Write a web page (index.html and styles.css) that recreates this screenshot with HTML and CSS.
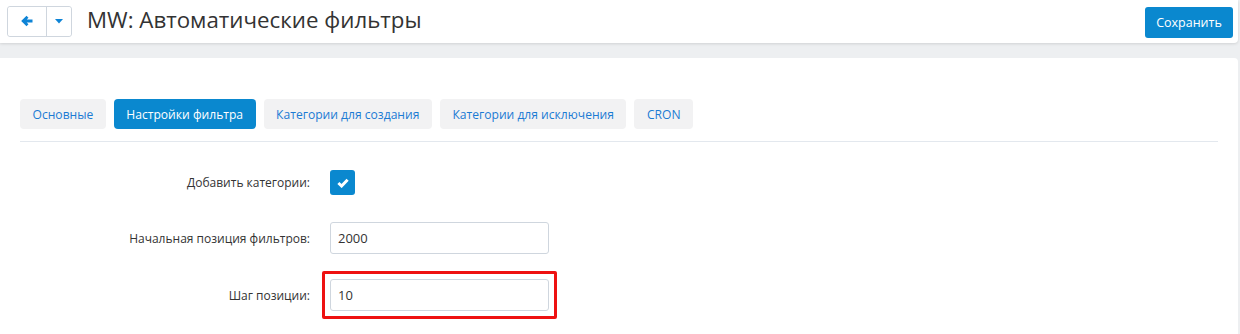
FILE: index.html
```html
<!DOCTYPE html>
<html lang="ru">
<head>
    <meta charset="UTF-8">
    <title>MW: Автоматические фильтры</title>
    <link rel="stylesheet" href="styles.css">
</head>
<body>

<!-- ШАПКА -->
<div class="header">
    <div class="header-left">
        <div class="btn-group">
            <button class="btn-back">
                <svg width="13" height="12" viewBox="0 0 13 12">
                    <path d="M11.5 6 H2.5 M6.5 1.8 L2.2 6 L6.5 10.2" fill="none" stroke="#0e84d6" stroke-width="2.8" stroke-linejoin="miter"/>
                </svg>
            </button>
            <button class="btn-drop">
                <svg width="8" height="5" viewBox="0 0 8 5">
                    <path d="M0 0 L8 0 L4 4.5 Z" fill="#0e84d6"/>
                </svg>
            </button>
        </div>
        <h1 class="title">MW: Автоматические фильтры</h1>
    </div>
    <button class="btn-save">Сохранить</button>
</div>

<!-- КОНТЕНТ -->
<div class="panel">
    <div class="tabs">
        <a class="tab">Основные</a>
        <a class="tab active">Настройки фильтра</a>
        <a class="tab">Категории для создания</a>
        <a class="tab">Категории для исключения</a>
        <a class="tab">CRON</a>
    </div>

    <div class="form">
        <div class="form-row row-check">
            <label>Добавить категории:</label>
            <span class="checkbox">
                <svg width="12" height="10" viewBox="0 0 12 10">
                    <path d="M1.4 5 L4.6 8 L10.6 1.8" fill="none" stroke="#fff" stroke-width="3"/>
                </svg>
            </span>
        </div>
        <div class="form-row row-start">
            <label>Начальная позиция фильтров:</label>
            <input type="text" value="2000">
        </div>
        <div class="form-row row-step">
            <label>Шаг позиции:</label>
            <div class="highlight">
                <input type="text" value="10">
            </div>
        </div>
    </div>
</div>

</body>
</html>
```

FILE: styles.css
```css
body {
    margin: 0;
    font-family: "Open Sans", Arial, sans-serif;
    background-color: #edeff1;
    color: #333;
    height: 334px;
    overflow: hidden;
}

.header {
    display: flex;
    justify-content: space-between;
    align-items: center;
    width: 1224px;
    height: 43px;
    padding: 0 7px;
    background-color: white;
    box-shadow: 0 1px 3px rgba(0, 0, 0, 0.12);
    border-bottom-right-radius: 4px;
}

.header-left {
    display: flex;
    align-items: center;
}

.btn-group {
    display: flex;
    border: 1px solid #cfd6de;
    border-radius: 3px;
    height: 29px;
    margin-top: -1px;
}

.btn-group button {
    border: none;
    background: white;
    padding: 0;
    display: flex;
    align-items: center;
    justify-content: center;
    cursor: pointer;
}

.btn-back {
    width: 39px;
    border-right: 1px solid #cfd6de !important;
    border-radius: 3px 0 0 3px;
}

.btn-drop {
    width: 24px;
    border-radius: 0 3px 3px 0;
}

.title {
    margin: -3px 0 0 15px;
    font-size: 22.3px;
    font-weight: normal;
    color: #333;
    line-height: 30px;
}

.btn-save {
    width: 88px;
    height: 31px;
    margin-top: 1px;
    margin-right: -2px;
    background-color: #0a88cf;
    color: white;
    border: none;
    border-radius: 3px;
    font-family: "Open Sans", Arial, sans-serif;
    font-size: 12.5px;
    cursor: pointer;
}

.panel {
    box-sizing: border-box;
    width: 1238px;
    height: 276px;
    margin-top: 15px;
    padding: 41px 20px 0;
    background-color: white;
    border-top-right-radius: 4px;
}

.tabs {
    display: flex;
    gap: 8px;
    padding-bottom: 12px;
    border-bottom: 1px solid #e3e8ee;
}

.tab {
    display: flex;
    align-items: center;
    height: 30px;
    padding: 0 12.5px;
    background-color: #f2f2f3;
    color: #1b7bd3;
    font-size: 12.1px;
    border-radius: 4px;
    cursor: pointer;
}

.tab.active {
    background-color: #0a88cf;
    color: white;
}

.form-row {
    display: flex;
    align-items: center;
}

.form-row label {
    width: 290px;
    text-align: right;
    font-size: 12px;
    color: #333;
    margin-right: 20px;
}

.row-check {
    margin-top: 28px;
    height: 25px;
}

.row-start {
    margin-top: 27px;
}

.row-step {
    margin-top: 17px;
}

.checkbox {
    display: flex;
    align-items: center;
    justify-content: center;
    width: 25px;
    height: 25px;
    background-color: #0a88cf;
    border-radius: 3px;
}

.form-row input {
    width: 219px;
    height: 32px;
    box-sizing: border-box;
    padding: 0 7px;
    border: 1px solid #cfd6de;
    border-radius: 3px;
    font-family: "Open Sans", Arial, sans-serif;
    font-size: 13px;
    color: #333;
}

.highlight {
    margin-left: -8px;
    padding: 5px;
    border: 3px solid #ee1111;
    border-radius: 2px;
}

.highlight input {
    display: block;
}
```
